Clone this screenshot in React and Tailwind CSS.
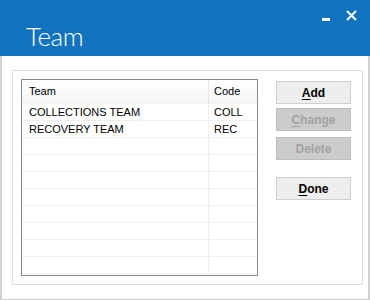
const rows = [
    { team: 'COLLECTIONS TEAM', code: 'COLL' },
    { team: 'RECOVERY TEAM', code: 'REC' },
    ...Array.from({ length: 8 }, () => ({ team: '', code: '' }))
];

const Btn = ({ label, hot = true, disabled, className = '' }) => (
    <button
        className={
            'w-[75px] h-[23px] border text-[12px] font-bold leading-none flex items-center justify-center ' +
            (disabled
                ? 'bg-[#cccccc] border-[#bdbdbd] text-[#a3a3a3] '
                : 'bg-[#eeeeee] border-[#cfcfcf] text-black ') +
            className
        }
    >
        {hot ? (
            <span>
                <span className="underline underline-offset-2">{label.charAt(0)}</span>
                {label.slice(1)}
            </span>
        ) : (
            <span>{label}</span>
        )}
    </button>
);

export default function App() {
    return (
        <div className="w-[370px] h-[300px] bg-white flex flex-col" style={{ fontFamily: '"Liberation Sans", Arial, sans-serif' }}>
            <div className="h-[56px] bg-[#1073be] flex justify-between text-white shrink-0">
                <div className="pl-[26px] pt-[17px] text-[26px] font-light tracking-[-0.4px]" style={{ fontFamily: '"Segoe UI", Lato, "Open Sans", sans-serif' }}>
                    Team
                </div>
                <div className="flex items-start pt-[10px] pr-[13px] gap-[16px]">
                    <div className="w-[8px] h-[3px] bg-white mt-[8px]" />
                    <svg width="11" height="11" viewBox="0 0 11 11">
                        <path d="M1 1L10 10M10 1L1 10" stroke="white" strokeWidth="2" />
                    </svg>
                </div>
            </div>
            <div className="flex-1 border-l-2 border-r-2 border-b-2 border-[#d0d0d0] pl-[10px] pr-[5px] pt-[14px] pb-[14px] flex">
                <div className="flex-1 border border-[#d5dfe6] shadow-[inset_1px_1px_0_#ffffff] p-[8px] flex gap-[18px]">
                    <div className="w-[237px] h-[197px] border border-[#828790] flex flex-col text-[11px] text-black">
                        <div className="h-[24px] flex bg-gradient-to-b from-white to-[#f4f5f7] border-b border-[#eef0f2]">
                            <div className="w-[187px] pl-[7px] flex items-center border-r border-[#e3e5e8]">Team</div>
                            <div className="flex-1 pl-[5px] flex items-center">Code</div>
                        </div>
                        {rows.map((r, i) => (
                            <div key={i} className="h-[17px] flex border-b border-[#efefef]">
                                <div className="w-[187px] pl-[7px] pt-[1px] flex items-center border-r border-[#efefef]">{r.team}</div>
                                <div className="flex-1 pl-[5px] pt-[1px] flex items-center">{r.code}</div>
                            </div>
                        ))}
                    </div>
                    <div className="flex flex-col pt-[2px]">
                        <Btn label="Add" />
                        <Btn label="Change" disabled className="mt-[4px]" />
                        <Btn label="Delete" hot={false} disabled className="mt-[6px]" />
                        <Btn label="Done" className="mt-[17px]" />
                    </div>
                </div>
            </div>
        </div>
    );
}
